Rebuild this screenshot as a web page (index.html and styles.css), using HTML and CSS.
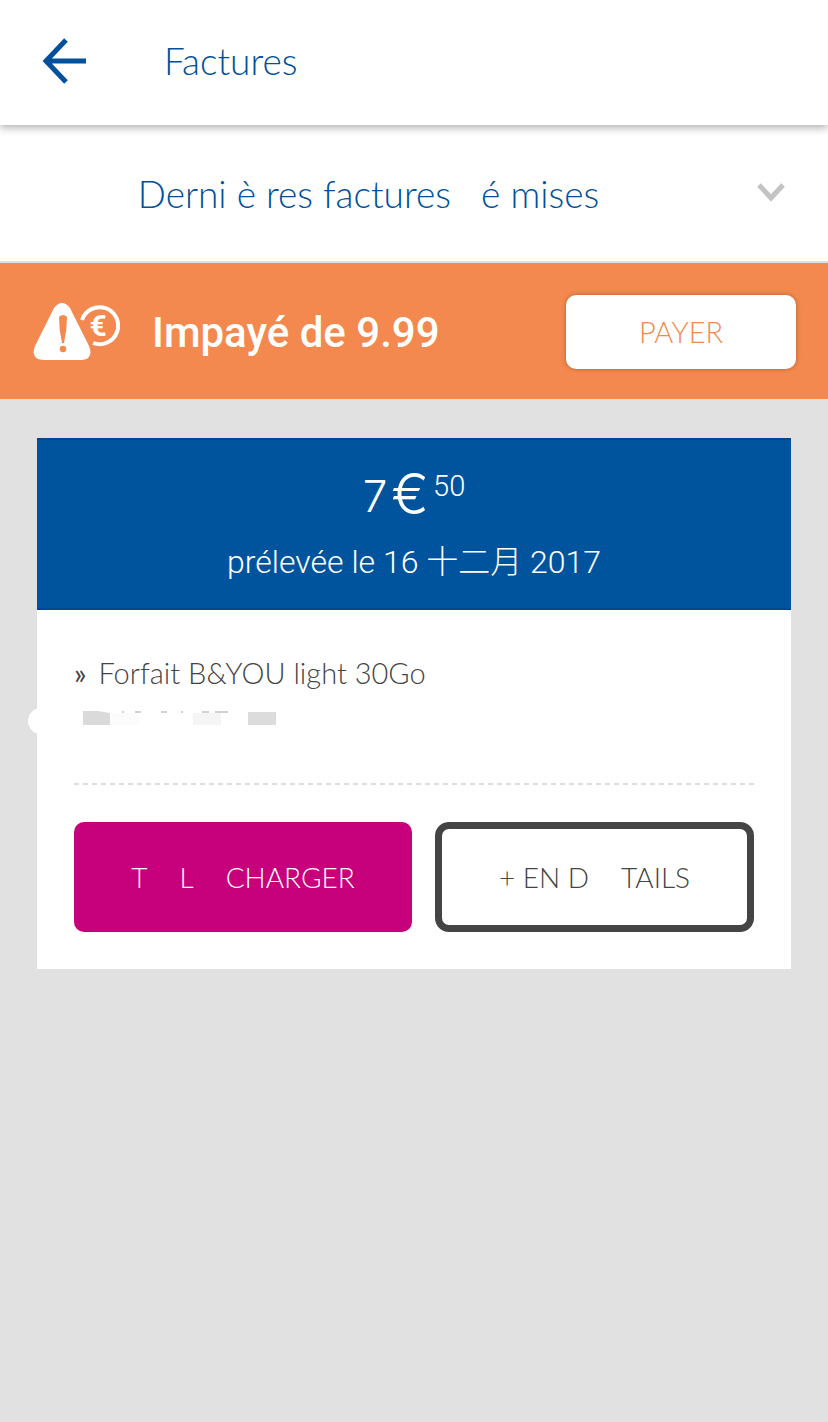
FILE: index.html
```
<!DOCTYPE html>
<html lang="fr">
<head>
    <meta charset="UTF-8">
    <meta name="viewport" content="width=device-width, initial-scale=1.0">
    <title>Factures</title>
    <link rel="stylesheet" href="styles.css">
</head>
<body>

<header class="topbar">
    <a href="#" class="back" aria-label="Retour">
        <svg width="44" height="46" viewBox="0 0 44 46">
            <path d="M24 2 L4 23 L24 44 M4 23 H44" fill="none" stroke="#00509b" stroke-width="5"/>
        </svg>
    </a>
    <h1>Factures</h1>
</header>

<div class="filter">
    <select aria-label="Factures à afficher">
        <option>Derni è res factures&nbsp;&nbsp; é mises</option>
    </select>
    <svg class="chevron" width="28" height="20" viewBox="0 0 28 20">
        <path d="M2 2 L14 15 L26 2" fill="none" stroke="#c3c3c3" stroke-width="5"/>
    </svg>
</div>

<section class="unpaid">
    <svg class="warning" width="88" height="60" viewBox="0 0 88 60">
        <path d="M50 18 A18.500 18.500 0 1 1 61 41" fill="none" stroke="#fff" stroke-width="4"/>
        <text x="66" y="34" text-anchor="middle" class="coin">€</text>
        <path d="M22 6 Q30 -4 38 6 L57 44 Q62 57 50 58 H11 Q-2 57 3 44 Z" fill="#fff"/>
        <path d="M27 15 Q31 11 35 15 Q35 28 32 41 H30 Q27 28 27 15 Z" fill="#f4894f"/>
        <circle cx="31" cy="47" r="3.200" fill="#f4894f"/>
    </svg>
    <strong>Impayé de 9.99</strong>
    <button type="button" class="pay">PAYER</button>
</section>

<main class="bill">
    <div class="bill-head">
        <p class="amount"><span>7</span><span class="euro">€</span><sup>50</sup></p>
        <p class="date">prélevée le 16 十二月 2017</p>
    </div>
    <div class="bill-body">
        <p class="plan"><b>»</b>Forfait B&amp;YOU light 30Go</p>
        <!-- masked phone number -->
        <svg class="masked" width="288" height="26" viewBox="0 0 288 26">
            <rect width="288" height="26" rx="13" fill="#fff"/>
            <path d="M55 3 H70 L82 5 V17 H55 Z" fill="#dadada"/>
            <rect x="83" y="5" width="27" height="12" fill="#fbfbfb"/>
            <rect x="165" y="5" width="28" height="12" fill="#f5f5f5"/>
            <rect x="220" y="4" width="28" height="13" fill="#dcdcdc"/>
            <path d="M94 4 H96 M107 4 H113 M133 4 H139 M153 4 H155 M174 4 H181 M187 4 H200" stroke="#a5a5a5"/>
        </svg>
        <hr>
        <div class="actions">
            <button type="button" class="download"><span>T</span><span>L</span><span>CHARGER</span></button>
            <button type="button" class="details"><span>+ EN D</span><span>TAILS</span></button>
        </div>
    </div>
</main>

</body>
</html>
```
FILE: styles.css
```
* {
    box-sizing: border-box;
}
body {
    margin: 0;
    background: #e1e1e1;
    font-family: Lato, "Noto Sans CJK SC", sans-serif;
    font-weight: 300;
    color: #444;
}
h1, p {
    margin: 0;
    font-weight: 300;
}
svg {
    display: block;
    flex: none;
}
button {
    font: inherit;
    font-size: 29px;
    line-height: 36px;
    border: none;
    border-radius: 10px;
    cursor: pointer;
}
.topbar {
    position: relative;
    display: flex;
    align-items: center;
    gap: 78px;
    height: 125px;
    padding: 0 42px 4px;
    background: #fff;
    box-shadow: 0 3px 8px rgba(0, 0, 0, 0.3);
}
.topbar h1 {
    font-size: 37px;
    line-height: 44px;
    color: #00509b;
}
.filter {
    display: flex;
    align-items: center;
    height: 138px;
    padding-right: 43px;
    background: #fff;
    border-bottom: 2px solid #dfe0d5;
}
.filter select {
    flex: 1;
    appearance: none;
    height: 100%;
    padding: 0 20px 0 0;
    border: none;
    background: none;
    font: inherit;
    font-size: 37px;
    color: #00509b;
    text-align-last: center;
}
.unpaid {
    display: flex;
    align-items: center;
    height: 136px;
    padding: 2px 32px 0;
    background: #f4894f;
}
.unpaid strong {
    flex: 1;
    margin-left: 32px;
    font-family: Roboto, sans-serif;
    font-size: 42px;
    font-weight: 500;
    color: #fff;
}
.coin {
    font-family: Roboto, sans-serif;
    font-size: 30px;
    font-weight: 700;
    fill: #fff;
}
.pay {
    width: 230px;
    height: 74px;
    background: #fff;
    color: #f4894f;
    box-shadow: 0 0 4px rgba(100, 60, 20, 0.5);
}
.bill {
    margin: 39px 37px;
    background: #fff;
}
.bill-head {
    height: 172px;
    padding-top: 30px;
    background: #00549e;
    border-top: 2px solid #004690;
    border-bottom: 2px solid #004690;
    text-align: center;
    color: #fff;
}
.amount {
    display: flex;
    justify-content: center;
    gap: 4px;
    font-family: Inter, sans-serif;
    font-size: 44px;
    line-height: 52px;
}
.amount .euro {
    font-size: 56px;
    line-height: 48px;
}
.amount sup {
    font-family: Roboto, sans-serif;
    font-size: 29px;
    line-height: 32px;
}
.date {
    margin-top: 18px;
    font-family: Roboto, "Noto Sans CJK SC", sans-serif;
    font-size: 32px;
    line-height: 44px;
}
.bill-body {
    padding: 43px 37px 37px;
}
.plan {
    font-size: 29px;
    line-height: 40px;
}
.plan b {
    margin-right: 12px;
}
.masked {
    margin: 15px 0 0 -46px;
}
hr {
    height: 2px;
    margin: 49px 0 37px;
    border: none;
    background: repeating-linear-gradient(90deg, #ddd 0 5px, #fff 5px 9px);
}
.actions {
    display: grid;
    grid-template-columns: 338fr 319fr;
    gap: 23px;
}
.actions button {
    display: flex;
    align-items: center;
    justify-content: center;
    gap: 32px;
    height: 110px;
    font-size: 28px;
}
.download {
    background: #c7007b;
    color: #fff;
}
.actions .details {
    background: #fff;
    border: 7px solid #444;
    border-radius: 14px;
    color: #444;
}
```
